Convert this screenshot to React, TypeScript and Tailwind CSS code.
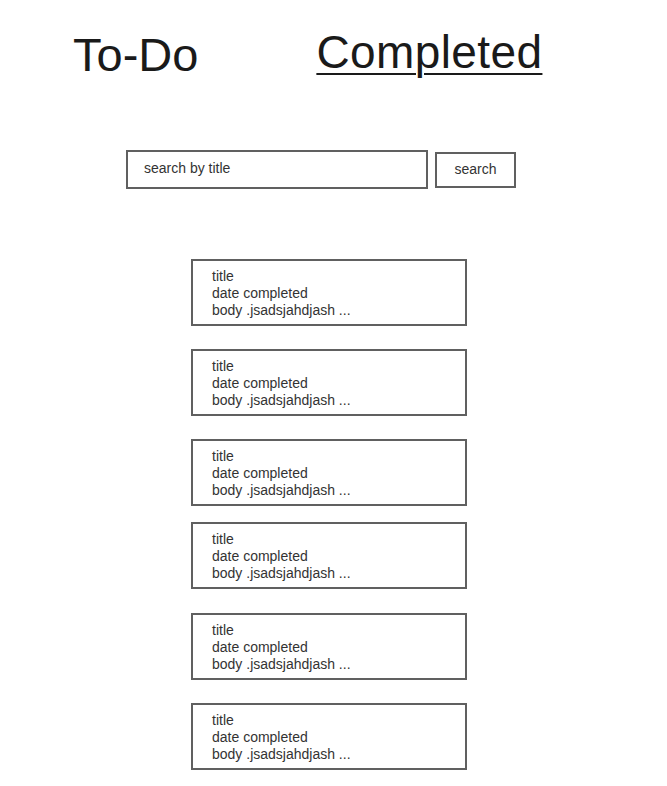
import React from "react";

const cardMargins = ["mt-[70px]", "mt-[23px]", "mt-[23px]", "mt-[16px]", "mt-[24px]", "mt-[23px]"];

function Card({ mt }: { mt: string }) {
  return (
    <div className={`${mt} w-[276px] h-[67px] border-2 border-[#606060] pl-[19px] pt-[7px] text-[14px] leading-[17px] text-[#333333]`}>
      <div>title</div>
      <div>date completed</div>
      <div>body .jsadsjahdjash ...</div>
    </div>
  );
}

export default function App() {
  return (
    <div className="w-[667px] h-[786px] bg-white font-['Liberation_Sans',Arial,sans-serif] overflow-hidden">
      <div className="flex items-start pl-[73px] h-[78px]">
        <span className="mt-[31px] text-[47px] leading-[47px] text-[#1a1a1a]">To-Do</span>
        <span className="ml-[118px] mt-[29px] text-[46px] leading-[46px] tracking-[0.4px] text-[#1a1a1a] underline decoration-2 underline-offset-[5px]">
          Completed
        </span>
      </div>
      <div className="mt-[72px] ml-[126px] flex items-center">
        <div className="w-[302px] h-[39px] border-2 border-[#606060] pl-[16px] pb-[3px] flex items-center text-[14px] text-[#333333]">
          search by title
        </div>
        <div className="ml-[7px] w-[81px] h-[36px] border-2 border-[#606060] flex items-center justify-center text-[14px] text-[#333333]">
          search
        </div>
      </div>
      <div className="ml-[191px] flex flex-col">
        {cardMargins.map((m, i) => (
          <Card key={i} mt={m} />
        ))}
      </div>
    </div>
  );
}
